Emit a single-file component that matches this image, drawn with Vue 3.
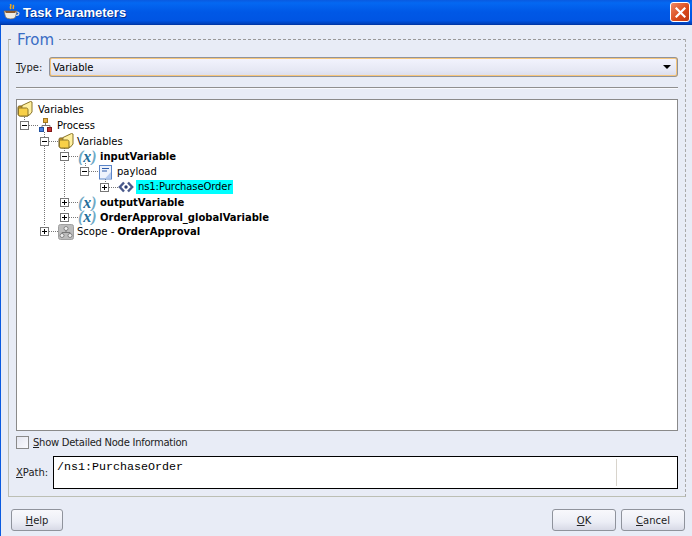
<script setup>
const rows = [
  { depth: -1, icon: 'folder', h: 16, label: 'Variables' },
  { depth: 0, icon: 'process', h: 16, toggle: 'minus', label: 'Process' },
  { depth: 1, icon: 'folder', h: 16, toggle: 'minus', label: 'Variables' },
  { depth: 2, icon: 'var', h: 15, toggle: 'minus', bold: 'inputVariable' },
  { depth: 3, icon: 'doc', h: 15, toggle: 'minus', label: 'payload' },
  { depth: 4, icon: 'element', h: 16, toggle: 'plus', label: 'ns1:PurchaseOrder', selected: true },
  { depth: 2, icon: 'var', h: 15, toggle: 'plus', bold: 'outputVariable' },
  { depth: 2, icon: 'var', h: 14, toggle: 'plus', bold: 'OrderApproval_globalVariable' },
  { depth: 1, icon: 'scope', h: 15, toggle: 'plus', label: 'Scope - ', bold: 'OrderApproval' }
]

// dotted guides of the tree, in tree coordinates
const guides = [
  [7.5, 17, 7.5, 20],
  [27.5, 32, 27.5, 126],
  [47.5, 48, 47.5, 112],
  [68.5, 63, 68.5, 67],
  [88.5, 79, 88.5, 82]
]
</script>

<template>
  <div class="dialog">
    <div class="titlebar">
      <svg class="cup" width="17" height="17" viewBox="0 0 17 17">
        <path d="M7 0c2.500 1.500-1 2.500 1 5M10 1c1.500 1-.5 2 .5 4" fill="none" stroke="#eda820" stroke-width="1.500" />
        <path d="M1 7h13l-1.500 6c-1 2.500-8.500 2.500-10 0z" fill="#f0ece4" stroke="#7a6a50" stroke-width=".7" />
        <path d="M2 7h11l-.7 2H2.700z" fill="#8a5a30" />
        <path d="M14 8c3 0 2.500 3.500-1 3.500" fill="none" stroke="#e0dcd4" stroke-width="1.200" />
      </svg>
      <span class="title">Task Parameters</span>
      <button class="close" type="button">
        <svg width="11" height="11" viewBox="0 0 11 11">
          <path d="M1.500 1.500l8 8M9.500 1.500l-8 8" stroke="#fff" stroke-width="2.200" stroke-linecap="square" />
        </svg>
      </button>
    </div>

    <div class="body">
      <fieldset class="from">
        <legend>From</legend>

        <div class="type-row">
          <label class="field-label"><u>T</u>ype:</label>
          <div class="select">
            <span>Variable</span>
            <i class="arrow"></i>
          </div>
        </div>

        <div class="separator"></div>

        <div class="tree">
          <svg class="guides" width="660" height="140">
            <line
              v-for="(g, i) in guides"
              :key="i"
              :x1="g[0]" :y1="g[1]" :x2="g[2]" :y2="g[3]"
              stroke="#777" stroke-dasharray="1 1"
            />
          </svg>

          <div
            v-for="(row, index) in rows"
            :key="index"
            class="row"
            :class="{ root: row.depth < 0 }"
            :style="{ height: row.h + 'px', paddingLeft: 3 + Math.max(row.depth, 0) * 20 + 'px' }"
          >
            <template v-if="row.toggle">
              <span class="toggle">
                <svg width="7" height="7" viewBox="0 0 7 7">
                  <path d="M1 3.500h5" stroke="#000" />
                  <path v-if="row.toggle === 'plus'" d="M3.500 1v5" stroke="#000" />
                </svg>
              </span>
              <span class="dash"></span>
            </template>

            <svg v-if="row.icon === 'folder'" class="icon" width="16" height="16" viewBox="0 0 16 16">
              <path d="M1 6.500C1 5 2 5 3 5h9v8.500c0 1-1 1.500-2 1.500H4c-2 0-3-.5-3-2z" fill="#d8a428" stroke="#6a5418" />
              <path d="M5 4.500l8.500-4 1.500.5v10l-2.500 3-8 .5z" fill="#fff0a0" stroke="#8a7428" />
              <path d="M1.500 7h8c1 0 1.500 1 1.500 2v6H3.500c-1.500 0-2-1-2-2z" fill="#f8d048" stroke="#8a7428" />
            </svg>

            <svg v-else-if="row.icon === 'process'" class="icon" width="16" height="16" viewBox="0 0 16 16">
              <path d="M7.500 5v3M4 11V8.500h8V11" fill="none" stroke="#777" />
              <rect x="5.500" y="1.500" width="4" height="4" fill="#e8b040" stroke="#a07820" />
              <rect x="1.500" y="10.500" width="4" height="4" fill="#4a80e0" stroke="#2050a0" />
              <rect x="9.500" y="10.500" width="4" height="4" fill="#c83030" stroke="#801818" />
            </svg>

            <svg v-else-if="row.icon === 'var'" class="icon" width="19" height="16" viewBox="0 0 19 16">
              <text x="0" y="13" class="var-glyph"><tspan fill="#6fa9c6">(</tspan><tspan fill="#1f6d9a">x</tspan><tspan fill="#6fa9c6">)</tspan></text>
            </svg>

            <svg v-else-if="row.icon === 'doc'" class="icon" width="16" height="16" viewBox="0 0 16 16">
              <rect x="1.500" y="1.500" width="12" height="13.500" fill="#eef3fc" stroke="#5b85c8" />
              <path d="M13 8v6.500H7z" fill="#b4caf0" />
              <path d="M4 4.500h7M4 7h5" stroke="#2f5cab" />
            </svg>

            <svg v-else-if="row.icon === 'element'" class="icon" width="16" height="16" viewBox="0 0 16 16">
              <path d="M6 3.500L1.800 8 6 12.500M10 3.500L14.200 8 10 12.500" fill="none" stroke="#4a5a8c" stroke-width="2.400" />
              <circle cx="8" cy="8" r="1.700" fill="#2a3a70" />
            </svg>

            <svg v-else-if="row.icon === 'scope'" class="icon" width="16" height="16" viewBox="0 0 16 16">
              <rect x=".5" y=".5" width="15" height="15" rx="2" fill="#bcbcbc" stroke="#a0a0a0" />
              <path d="M8 6v2.500M4 10V8.500h8V10" fill="none" stroke="#777" />
              <circle cx="8" cy="4.500" r="2" fill="#f0f0f0" stroke="#666" stroke-width=".7" />
              <circle cx="4" cy="11.500" r="2" fill="#f0f0f0" stroke="#666" stroke-width=".7" />
              <circle cx="12" cy="11.500" r="2" fill="#f0f0f0" stroke="#666" stroke-width=".7" />
            </svg>

            <span class="text" :class="{ selected: row.selected }">{{ row.label }}<b v-if="row.bold">{{ row.bold }}</b></span>
          </div>
        </div>

        <label class="detail">
          <span class="checkbox"></span>
          <span class="detail-text"><u>S</u>how Detailed Node Information</span>
        </label>

        <div class="xpath-row">
          <label class="field-label"><u>X</u>Path:</label>
          <div class="xpath">
            <span class="xpath-text">/ns1:PurchaseOrder</span>
            <span class="xpath-side"></span>
          </div>
        </div>
      </fieldset>

      <div class="footer">
        <button class="btn" type="button"><u>H</u>elp</button>
        <div class="footer-right">
          <button class="btn" type="button"><u>O</u>K</button>
          <button class="btn" type="button"><u>C</u>ancel</button>
        </div>
      </div>
    </div>
  </div>
</template>

<style>
html, body {
  margin: 0;
  background: #e8ecf6;
}
</style>

<style scoped>
.dialog {
  width: 692px;
  height: 536px;
  overflow: hidden;
  display: flex;
  flex-direction: column;
  font-family: "DejaVu Sans", sans-serif;
  font-size: 10px;
  color: #000;
  background: #e8ecf6;
}

.titlebar {
  height: 25px;
  box-sizing: border-box;
  display: flex;
  align-items: center;
  padding: 0 2px 0 3px;
  background: linear-gradient(#0a5ae0 0%, #0468f2 12%, #0058e6 50%, #0055e3 85%, #0040b8 100%);
  border-bottom: 1px solid #0038a8;
}

.title {
  margin-left: 3px;
  color: #fff;
  font-family: "Liberation Sans", sans-serif;
  font-weight: bold;
  font-size: 13px;
  text-shadow: 1px 1px 0 #003090;
}

.close {
  margin-left: auto;
  width: 20px;
  height: 20px;
  padding: 0;
  display: flex;
  align-items: center;
  justify-content: center;
  border: 1px solid #fff;
  border-radius: 3px;
  background: linear-gradient(135deg, #ee8866, #d84818 60%, #c03810);
}

.body {
  flex: 1;
  display: flex;
  flex-direction: column;
  border-left: 1px solid #0a5ae0;
  box-sizing: border-box;
  padding: 0 0 0 7px;
}

.from {
  margin: 4px 0 0 0;
  padding: 0 7px 8px 7px;
  width: 678px;
  height: 468px;
  box-sizing: border-box;
  border: 1px solid #bcbfb4;
  border-top: 1px dashed #999;
  border-right: 1px dashed #aaa;
}

.from legend {
  margin-left: -4px;
  padding: 2px 5px 0;
  font-size: 15px;
  line-height: 18px;
  color: #3a6cc4;
}

.type-row {
  display: flex;
  align-items: center;
  margin-top: 8px;
}

.field-label {
  width: 33px;
  flex: none;
  color: #222;
}

.select {
  flex: 1;
  height: 20px;
  box-sizing: border-box;
  display: flex;
  align-items: center;
  justify-content: space-between;
  padding: 0 5px 0 2px;
  border: 2px solid #f6c67c;
  border-radius: 3px;
  outline: 1px solid #8f939c;
  outline-offset: -1px;
  background: linear-gradient(#f2f3fd, #e6e8f4 70%, #dcdeec);
}

.arrow {
  width: 0;
  height: 0;
  border-left: 4px solid transparent;
  border-right: 4px solid transparent;
  border-top: 4px solid #000;
}

.separator {
  margin-top: 10px;
  height: 1px;
  background: #8f8f8f;
  border-bottom: 1px solid #f8f9fd;
}

.tree {
  position: relative;
  margin-top: 10px;
  height: 332px;
  box-sizing: border-box;
  border: 1px solid #8a8a8a;
  background: #fff;
}

.guides {
  position: absolute;
  left: 0;
  top: 0;
}

.row {
  position: relative;
  display: flex;
  align-items: center;
  white-space: nowrap;
}

.row.root {
  padding-left: 0 !important;
  margin-top: 1px;
}

.row.root .icon {
  margin-right: 5px;
}

.toggle {
  flex: none;
  width: 9px;
  height: 9px;
  box-sizing: border-box;
  border: 1px solid #777;
  background: #fff;
  display: flex;
  align-items: center;
  justify-content: center;
}

.toggle svg {
  flex: none;
}

.dash {
  width: 9px;
  flex: none;
  border-top: 1px dotted #777;
}

.icon {
  flex: none;
  margin-right: 3px;
}

.var-glyph {
  font-family: "Liberation Serif", serif;
  font-style: italic;
  font-weight: bold;
  font-size: 16px;
}

.text b {
  font-weight: bold;
}

.text.selected {
  background: #00ffff;
  padding: 1px 2px 2px;
  margin-left: -1px;
  letter-spacing: -0.1px;
}

.detail {
  display: flex;
  align-items: center;
  gap: 4px;
  margin-top: 4px;
  height: 14px;
  color: #222;
}

.detail-text {
  letter-spacing: -0.27px;
}

.checkbox {
  width: 13px;
  height: 13px;
  box-sizing: border-box;
  border: 1px solid #8a8a8a;
  background: linear-gradient(135deg, #e4e6f0, #fafafd);
}

.xpath-row {
  display: flex;
  align-items: center;
  margin-top: 7px;
}

.xpath-row .field-label {
  width: 37px;
}

.xpath {
  flex: 1;
  height: 33px;
  box-sizing: border-box;
  display: flex;
  border: 1px solid #000;
  background: #fff;
  padding: 2px 0;
}

.xpath-text {
  flex: 1;
  padding: 1px 3px;
  font-family: "Liberation Mono", monospace;
  font-size: 11.67px;
}

.xpath-side {
  width: 60px;
  border-left: 1px solid #d8d4cc;
}

.footer {
  display: flex;
  justify-content: space-between;
  padding: 12px 7px 0 3px;
}

.footer-right {
  display: flex;
  gap: 5px;
}

.btn {
  height: 22px;
  width: 64px;
  padding: 0;
  font: inherit;
  color: #222;
  border: 1px solid #8f939c;
  border-radius: 3px;
  background: linear-gradient(#f8f8fc, #eceef6 60%, #d8dae6);
}

.footer > .btn {
  width: 52px;
}
</style>
